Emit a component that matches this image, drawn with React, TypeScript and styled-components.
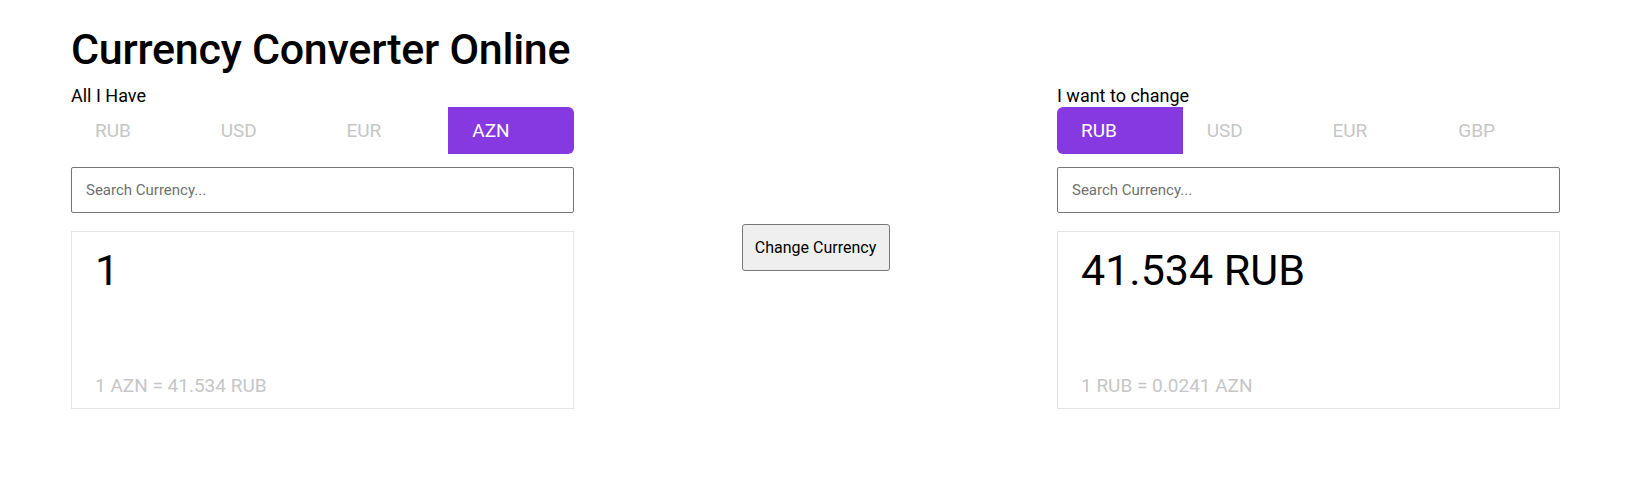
import React, { useState } from "react";
import styled, { createGlobalStyle } from "styled-components";

const GlobalStyle = createGlobalStyle`
  html, body {
    margin: 0;
    padding: 0;
    background: #ffffff;
  }
  body {
    font-family: "Roboto", "Liberation Sans", sans-serif;
    color: #000;
  }
  * { box-sizing: border-box; }
`;

const Page = styled.div`
  padding: 24px 66px 40px 71px;
`;

const Title = styled.h1`
  margin: 0 0 11px;
  font-size: 43px;
  line-height: 50px;
  font-weight: 500;
  letter-spacing: -0.25px;
`;

const Row = styled.div`
  display: flex;
  justify-content: space-between;
  align-items: center;
`;

const Panel = styled.section`
  width: 503px;
  display: flex;
  flex-direction: column;
`;

const Label = styled.div`
  font-size: 18px;
  line-height: 21px;
`;

const Tabs = styled.div`
  margin-top: 1px;
  display: grid;
  grid-template-columns: repeat(4, 1fr);
  height: 47px;
  border-radius: 6px;
  overflow: hidden;
`;

const Tab = styled.button<{ $active: boolean }>`
  border: none;
  margin: 0;
  padding: 0 0 0 24px;
  text-align: left;
  font-family: inherit;
  font-size: 19px;
  cursor: pointer;
  background: ${(p) => (p.$active ? "#8739e1" : "transparent")};
  color: ${(p) => (p.$active ? "#ffffff" : "#c6c6c6")};
`;

const Search = styled.input`
  margin-top: 13px;
  height: 46px;
  width: 100%;
  border: 1px solid #767676;
  border-radius: 2px;
  padding: 0 14px;
  font-family: inherit;
  font-size: 15px;
  color: #000;
  outline: none;
  &::placeholder {
    color: #707070;
  }
`;

const ResultBox = styled.div`
  margin-top: 18px;
  height: 178px;
  border: 1px solid #e4e4e4;
  padding: 13px 23px 11px;
  display: flex;
  flex-direction: column;
  justify-content: space-between;
`;

const Amount = styled.div`
  font-size: 43px;
  line-height: 50px;
`;

const Rate = styled.div`
  font-size: 19px;
  line-height: 22px;
  color: #c6c6c6;
`;

const SwapButton = styled.button`
  width: 148px;
  height: 47px;
  background: #efefef;
  border: 1px solid #767676;
  border-radius: 3px;
  font-family: inherit;
  font-size: 16px;
  color: #000;
  padding: 0;
  cursor: pointer;
`;

type PanelProps = {
  label: string;
  currencies: string[];
  active: string;
  amount: string;
  rate: string;
};

function CurrencyPanel({ label, currencies, active, amount, rate }: PanelProps) {
  const [selected, setSelected] = useState(active);
  return (
    <Panel>
      <Label>{label}</Label>
      <Tabs>
        {currencies.map((c) => (
          <Tab key={c} $active={c === selected} onClick={() => setSelected(c)}>
            {c}
          </Tab>
        ))}
      </Tabs>
      <Search placeholder="Search Currency..." />
      <ResultBox>
        <Amount>{amount}</Amount>
        <Rate>{rate}</Rate>
      </ResultBox>
    </Panel>
  );
}

export default function App() {
  return (
    <>
      <GlobalStyle />
      <Page>
        <Title>Currency Converter Online</Title>
        <Row>
          <CurrencyPanel
            label="All I Have"
            currencies={["RUB", "USD", "EUR", "AZN"]}
            active="AZN"
            amount="1"
            rate="1 AZN = 41.534 RUB"
          />
          <SwapButton>Change Currency</SwapButton>
          <CurrencyPanel
            label="I want to change"
            currencies={["RUB", "USD", "EUR", "GBP"]}
            active="RUB"
            amount="41.534 RUB"
            rate="1 RUB = 0.0241 AZN"
          />
        </Row>
      </Page>
    </>
  );
}
